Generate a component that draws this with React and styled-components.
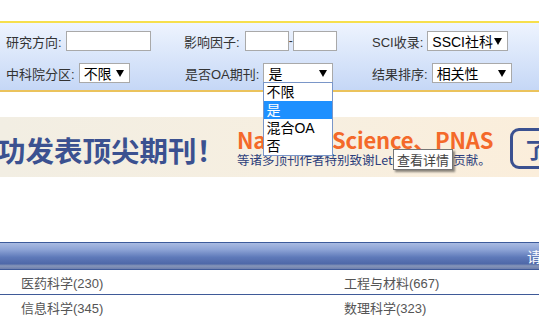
import React from "react";
import styled, { createGlobalStyle } from "styled-components";

const Global = createGlobalStyle`
  html, body { margin: 0; padding: 0; background: #fff; overflow: hidden; }
  body { font-family: "Liberation Sans", "Noto Sans CJK SC", sans-serif; width: 539px; }
`;

const Page = styled.div`
  padding-top: 21px;
  width: 539px;
  overflow: hidden;
`;

const FilterPanel = styled.div`
  border-top: 2px solid #f6df4c;
  border-bottom: 2px solid #ebc35c;
  background: linear-gradient(#eef4fe, #c5d7f6);
  display: grid;
  grid-template-columns: 178px 188px 1fr;
  row-gap: 12px;
  padding: 8px 0 7px 6px;
`;

const Field = styled.div`
  display: flex;
  align-items: center;
  gap: ${(p) => p.$gap ?? 4}px;
  height: 20px;
  padding-left: ${(p) => p.$indent ?? 0}px;
`;

const RangeGroup = styled.div`
  display: flex;
  align-items: center;
`;

const Label = styled.span`
  font-size: 13px;
  color: #333;
  white-space: nowrap;
`;

const TextInput = styled.div`
  box-sizing: border-box;
  width: ${(p) => p.$w}px;
  height: 20px;
  background: #fff;
  border: 1px solid #a9a9a9;
`;

const Dash = styled.span`
  font-size: 12px;
  color: #333;
  width: 4px;
  text-align: center;
`;

const SelectBox = styled.div`
  position: relative;
  box-sizing: border-box;
  width: ${(p) => p.$w}px;
  height: 20px;
  background: #fff;
  border: 1px solid #a9a9a9;
  display: flex;
  align-items: center;
  justify-content: space-between;
  padding: 0 5px 0 4px;
  font-size: 14px;
  color: #000;
  white-space: nowrap;
`;

const Arrow = () => (
  <svg width="8" height="8" viewBox="0 0 8 8" style={{ flex: "none" }}>
    <polygon points="0,1 8,1 4,8" fill="#000" />
  </svg>
);

const OptionList = styled.ul`
  position: absolute;
  left: -1px;
  top: 100%;
  width: 70px;
  box-sizing: border-box;
  margin: 0;
  padding: 0;
  list-style: none;
  background: #fff;
  border: 1px solid #7a96c8;
  z-index: 5;
`;

const Option = styled.li`
  height: 18px;
  line-height: 18px;
  padding-left: 2px;
  font-size: 14px;
  color: ${(p) => (p.$active ? "#fff" : "#000")};
  background: ${(p) => (p.$active ? "#1e90ff" : "#fff")};
`;

const Banner = styled.div`
  position: relative;
  margin-top: 25px;
  height: 60px;
  background: linear-gradient(90deg, #f2eee3, #f7efe0 60%, #fbeedb);
  display: flex;
  align-items: center;
  overflow: hidden;
`;

const BigTitle = styled.div`
  margin-left: -3px;
  font-family: "Noto Sans CJK SC", sans-serif;
  font-weight: 700;
  font-size: 28.5px;
  color: #3b5190;
  white-space: nowrap;
  width: 240px;
  flex: none;
  margin-top: 4px;
`;

const Promo = styled.div`
  display: flex;
  flex-direction: column;
  width: 273px;
  flex: none;
`;

const PromoHead = styled.div`
  font-family: "Noto Sans CJK SC", sans-serif;
  font-weight: 700;
  font-size: 22px;
  line-height: 25px;
  color: #f4692a;
  white-space: nowrap;
  letter-spacing: -0.2px;
`;

const PromoSub = styled.div`
  font-family: "Noto Sans CJK SC", sans-serif;
  font-size: 12.5px;
  line-height: 15px;
  color: #2e3f7c;
  white-space: nowrap;
`;

const DetailButton = styled.div`
  flex: none;
  box-sizing: border-box;
  height: 41px;
  width: 110px;
  border: 3px solid #3b5190;
  border-radius: 9px;
  display: flex;
  align-items: center;
  padding-left: 12px;
  font-family: "Noto Sans CJK SC", sans-serif;
  font-weight: 700;
  font-size: 22px;
  color: #3b5190;
  white-space: nowrap;
  margin-top: 2px;
`;

const Tooltip = styled.div`
  position: absolute;
  left: 393px;
  top: 32px;
  box-sizing: border-box;
  width: 60px;
  height: 21px;
  background: #fff;
  border: 1px solid #767676;
  box-shadow: 2px 2px 2px rgba(0, 0, 0, 0.45);
  font-size: 13px;
  color: #444;
  display: flex;
  align-items: center;
  justify-content: center;
  font-family: "Noto Sans CJK SC", sans-serif;
`;

const Table = styled.div`
  margin-top: 65px;
`;

const TableHead = styled.div`
  height: 28px;
  box-sizing: border-box;
  border-top: 1px solid #3d5b9b;
  border-bottom: 1px solid #3f5a98;
  background: linear-gradient(
    #a9bbe2 0%,
    #8ea4d6 25%,
    #5e79b9 55%,
    #4e68a8 80%,
    #8796b8 88%,
    #6d7fae 100%
  );
  display: flex;
  justify-content: flex-end;
  align-items: center;
  overflow: hidden;
`;

const HeadText = styled.span`
  color: #fff;
  font-size: 14px;
  margin-right: -4px;
  width: 16px;
  white-space: nowrap;
  font-family: "Noto Sans CJK SC", sans-serif;
`;

const Row = styled.div`
  display: grid;
  grid-template-columns: 323px 1fr;
  padding-left: 21px;
  height: 25px;
  box-sizing: border-box;
  border-bottom: 1px solid #3f5a98;
  align-items: center;
`;

const Cell = styled.span`
  font-size: 13px;
  color: #555;
  white-space: nowrap;
`;

export default function App() {
  return (
    <Page>
      <Global />
      <FilterPanel>
        <Field>
          <Label>研究方向:</Label>
          <TextInput $w={85} />
        </Field>
        <Field $gap={5}>
          <Label>影响因子:</Label>
          <RangeGroup>
            <TextInput $w={44} />
            <Dash>-</Dash>
            <TextInput $w={44} />
          </RangeGroup>
        </Field>
        <Field>
          <Label>SCI收录:</Label>
          <SelectBox $w={81}>
            SSCI社科
            <Arrow />
          </SelectBox>
        </Field>
        <Field>
          <Label>中科院分区:</Label>
          <SelectBox $w={51}>
            不限
            <Arrow />
          </SelectBox>
        </Field>
        <Field $indent={1}>
          <Label>是否OA期刊:</Label>
          <SelectBox $w={70}>
            是
            <Arrow />
            <OptionList>
              <Option>不限</Option>
              <Option $active>是</Option>
              <Option>混合OA</Option>
              <Option>否</Option>
            </OptionList>
          </SelectBox>
        </Field>
        <Field>
          <Label>结果排序:</Label>
          <SelectBox $w={80}>
            相关性
            <Arrow />
          </SelectBox>
        </Field>
      </FilterPanel>

      <Banner>
        <BigTitle>功发表顶尖期刊！</BigTitle>
        <Promo>
          <PromoHead>Nature、Science、PNAS</PromoHead>
          <PromoSub>等诸多顶刊作者特别致谢LetPub的重要贡献。</PromoSub>
        </Promo>
        <DetailButton>了解详情</DetailButton>
        <Tooltip>查看详情</Tooltip>
      </Banner>

      <Table>
        <TableHead>
          <HeadText>请选择</HeadText>
        </TableHead>
        <Row>
          <Cell>医药科学(230)</Cell>
          <Cell>工程与材料(667)</Cell>
        </Row>
        <Row>
          <Cell>信息科学(345)</Cell>
          <Cell>数理科学(323)</Cell>
        </Row>
      </Table>
    </Page>
  );
}
